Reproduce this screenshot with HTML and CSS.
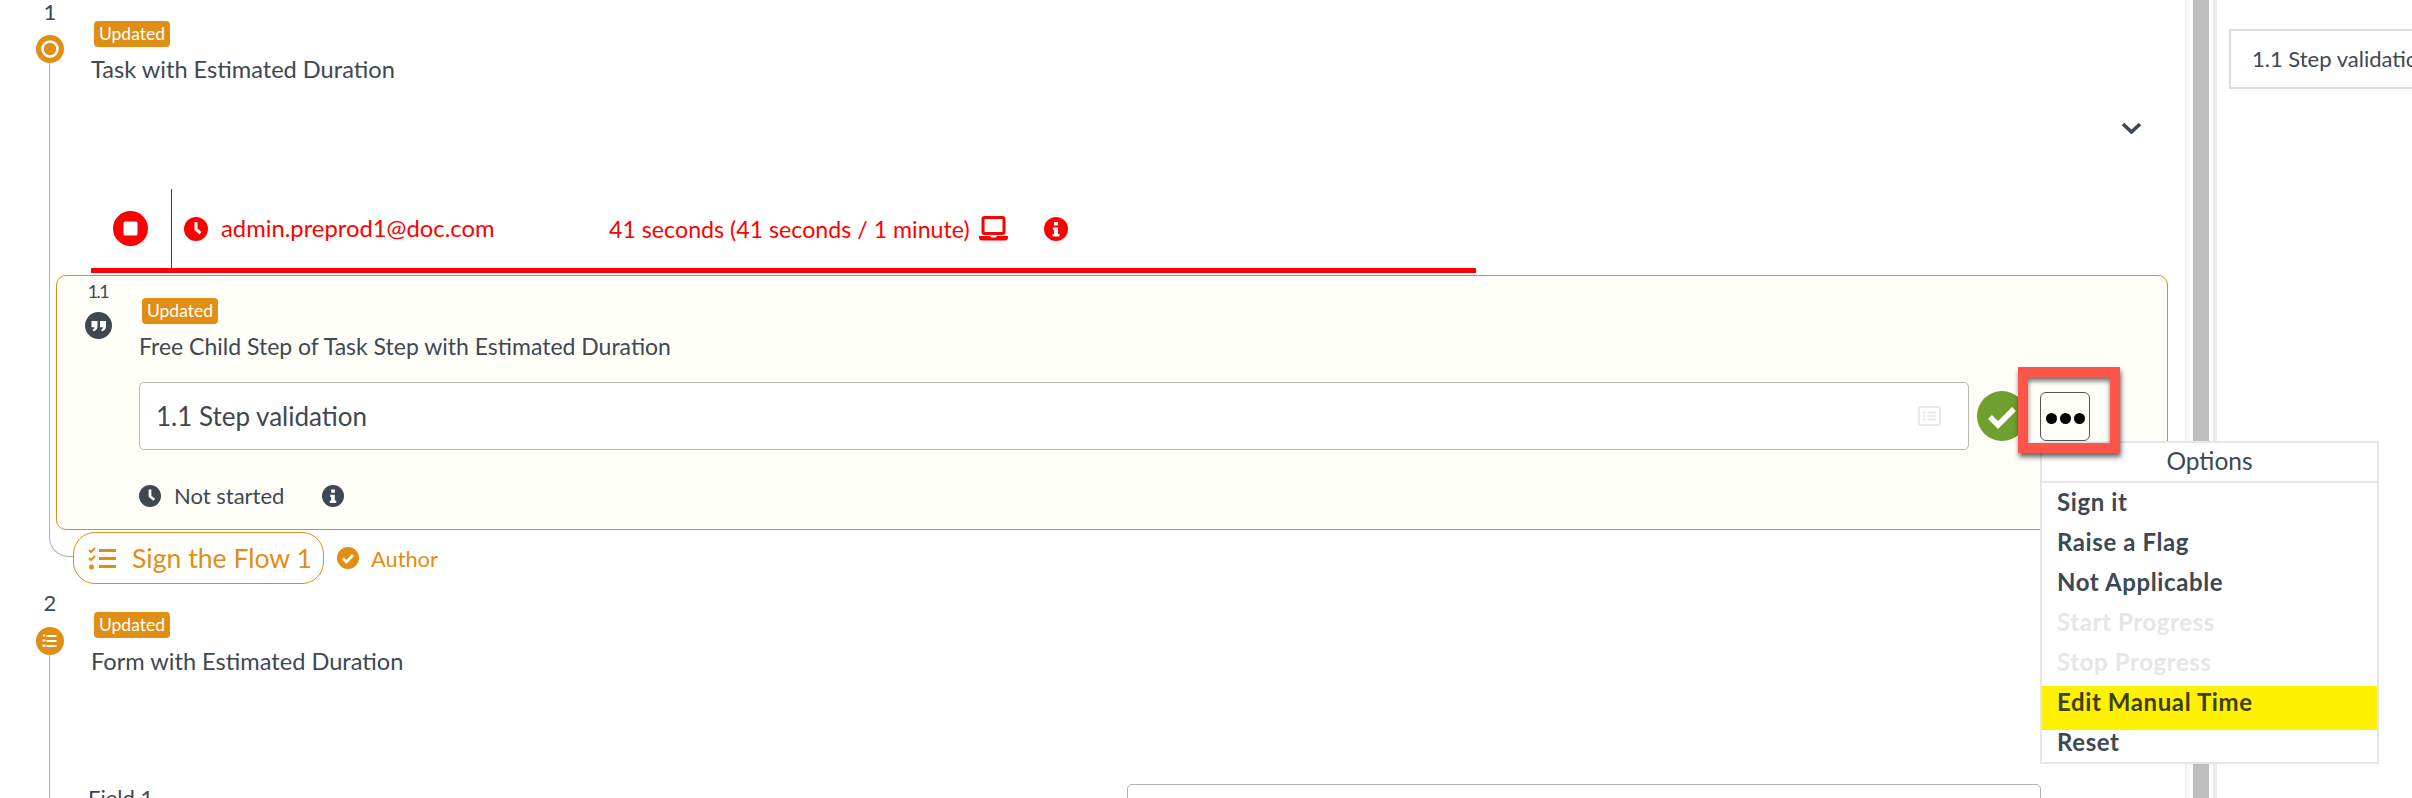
FILE: index.html

```html
<!DOCTYPE html>
<html lang="en">
<head>
  <meta charset="UTF-8">
  <title>Task with Estimated Duration</title>
  <link rel="stylesheet" href="styles.css">
</head>
<body>

<div class="main">

  <!-- step 1 -->
  <div class="step">
    <div class="rail">
      <div class="rail-num">1</div>
      <svg class="rail-icon" viewBox="0 0 28 28"><circle cx="14" cy="14" r="14" fill="#e08e14"/><circle cx="14" cy="14" r="7.5" fill="none" stroke="#fff" stroke-width="2.6"/></svg>
      <div class="rail-line"></div>
      <div class="rail-curve"></div>
    </div>
    <div class="step-body">
      <span class="badge">Updated</span>
      <div class="step-title">Task with Estimated Duration</div>
      <div class="chevron-row">
        <svg width="21" height="12" viewBox="0 0 21 12"><path d="M2 2l8.500 8 8.500-8" fill="none" stroke="#3e4852" stroke-width="3.600"/></svg>
      </div>

      <div class="timer">
        <svg class="timer-stop" viewBox="0 0 35 35"><circle cx="17.500" cy="17.500" r="17.500" fill="#f00"/><rect x="10.500" y="10.500" width="14" height="14" rx="1.500" fill="#fff"/></svg>
        <div class="timer-sep"></div>
        <svg class="timer-clock" viewBox="0 0 24 24"><circle cx="12" cy="12" r="12" fill="#f00"/><path d="M10.500 5h3v6.600l4 3.400-2 2.200-5-4.300z" fill="#fff"/></svg>
        <span class="timer-user">admin.preprod1@doc.com</span>
        <span class="timer-time">41 seconds (41 seconds / 1 minute)</span>
        <svg class="timer-laptop" width="29" height="25" viewBox="0 0 29 25"><rect x="4" y="1.500" width="21" height="16" rx="1.500" fill="none" stroke="#f00" stroke-width="3"/><path d="M0 20h11l1 1.500h5l1-1.500h11v1.500a3 3 0 0 1-3 3h-23a3 3 0 0 1-3-3z" fill="#f00"/></svg>
        <svg class="timer-info" width="24" height="24" viewBox="0 0 24 24"><circle cx="12" cy="12" r="12" fill="#f00"/><path d="M10 5h4v3.500h-4zM9 10.500h5v6.500h1.500v2.500h-7v-2.500h1.500v-4h-1z" fill="#fff"/></svg>
      </div>

      <div class="card">
        <div class="card-rail">
          <div class="card-num">1.1</div>
          <svg width="27" height="27" viewBox="0 0 27 27"><circle cx="13.500" cy="13.500" r="13.500" fill="#3e4852"/><path d="M6.500 9h6v5.500c0 2.800-1.800 4.300-4.200 4.800l-.6-1.800c1.100-.3 1.800-1 1.900-2.200h-3.100zM15 9h6v5.500c0 2.800-1.800 4.300-4.200 4.800l-.6-1.800c1.100-.3 1.800-1 1.900-2.200h-3.100z" fill="#fff"/></svg>
        </div>
        <div class="card-body">
          <span class="badge">Updated</span>
          <div class="card-title">Free Child Step of Task Step with Estimated Duration</div>
          <div class="field-row">
            <div class="field">
              <span>1.1 Step validation</span>
              <svg width="23" height="20" viewBox="0 0 23 20"><rect x="1" y="1" width="21" height="18" rx="2" fill="none" stroke="#e8e8e8" stroke-width="2"/><path d="M5 5.500h2.500v2h-2.500zM9.500 5.500h8.500v2h-8.500zM5 9h2.500v2h-2.500zM9.500 9h8.500v2h-8.500zM5 12.500h2.500v2h-2.500zM9.500 12.500h8.500v2h-8.500z" fill="#e8e8e8"/></svg>
            </div>
            <svg class="done" width="50" height="50" viewBox="0 0 50 50"><circle cx="25" cy="25" r="25" fill="#6f9f2f"/><path d="M13 26l8 8 16-16" fill="none" stroke="#fff" stroke-width="5.500"/></svg>
            <div class="opt-wrap">
              <div class="opt-btn"><i></i><i></i><i></i></div>
              <div class="callout"></div>
              <div class="menu">
                <div class="menu-head">Options</div>
                <div class="menu-item">Sign it</div>
                <div class="menu-item">Raise a Flag</div>
                <div class="menu-item">Not Applicable</div>
                <div class="menu-item off">Start Progress</div>
                <div class="menu-item off">Stop Progress</div>
                <div class="menu-item mark">Edit Manual Time</div>
                <div class="menu-item">Reset</div>
              </div>
            </div>
          </div>
          <div class="status">
            <svg width="22" height="22" viewBox="0 0 24 24"><circle cx="12" cy="12" r="12" fill="#3e4852"/><path d="M10.500 5h3v6.600l4 3.400-2 2.200-5-4.300z" fill="#fff"/></svg>
            <span class="status-text">Not started</span>
            <svg width="22" height="22" viewBox="0 0 24 24"><circle cx="12" cy="12" r="12" fill="#3e4852"/><path d="M10 5h4v3.500h-4zM9 10.500h5v6.500h1.500v2.500h-7v-2.500h1.500v-4h-1z" fill="#fff"/></svg>
          </div>
        </div>
      </div>

      <div class="sign-row">
        <div class="pill">
          <svg width="28" height="23" viewBox="0 0 28 23"><path d="M1 3l2 2 4-4M1 11l2 2 4-4" fill="none" stroke="#e08e14" stroke-width="2"/><circle cx="3.500" cy="20" r="2.500" fill="#e08e14"/><path d="M11 2h17v3h-17zM11 10h17v3h-17zM11 18h17v3h-17z" fill="#e08e14"/></svg>
          <span>Sign the Flow 1</span>
        </div>
        <svg width="22" height="22" viewBox="0 0 22 22"><circle cx="11" cy="11" r="11" fill="#e08e14"/><path d="M6 11.500l3.500 3.500 6.500-7" fill="none" stroke="#fff" stroke-width="2.800"/></svg>
        <span class="sign-role">Author</span>
      </div>
    </div>
  </div>

  <!-- step 2 -->
  <div class="step step-two">
    <div class="rail">
      <div class="rail-num">2</div>
      <svg class="rail-icon" viewBox="0 0 28 28"><circle cx="14" cy="14" r="14" fill="#e08e14"/><path d="M10.500 8h10v2h-10zM10.500 13h10v2h-10zM10.500 18h10v2h-10zM7 7.500h2v2h-2zM6.500 12.500h3v2h-3zM6.500 17.500h3v2.500h-3z" fill="#fff"/></svg>
      <div class="rail-line"></div>
    </div>
    <div class="step-body">
      <span class="badge">Updated</span>
      <div class="step-title">Form with Estimated Duration</div>
      <div class="form-row">
        <span class="form-label">Field 1</span>
        <div class="form-input"></div>
      </div>
    </div>
  </div>

</div>

<div class="divider"><div class="divider-bar"></div></div>

<div class="side">
  <div class="side-box">1.1 Step validation</div>
</div>

</body>
</html>
```

FILE: styles.css

```css
html, body {
  margin: 0;
  height: 798px;
  overflow: hidden;
}
body {
  display: flex;
  background-color: #fff;
  color: #3e4852;
  font-family: 'Lato', sans-serif;
}
.main {
  width: 2185px;
  flex: none;
}
.step {
  display: grid;
  grid-template-columns: 91px 1fr;
}
.step-two {
  margin-top: 7px;
  height: 300px;
}
.step-two .rail-icon {
  margin-top: 12px;
}
.step-two .step-title {
  margin-top: 9px;
}

/* timeline column */
.rail {
  display: flex;
  flex-direction: column;
  align-items: flex-start;
}
.rail-num {
  width: 100px;
  height: 24px;
  line-height: 24px;
  text-align: center;
  font-size: 22px;
}
.rail-icon {
  width: 28px;
  height: 28px;
  margin: 10.500px 0 0 36px;
  flex: none;
}
.rail-line {
  flex: 1;
  width: 1px;
  margin-left: 49px;
  background-color: #b3b3b3;
}
.rail-curve {
  width: 24px;
  height: 20px;
  margin: 0 0 27px 49px;
  box-sizing: border-box;
  border-left: 1px solid #b3b3b3;
  border-bottom: 1px solid #b3b3b3;
  border-bottom-left-radius: 20px;
}

.badge {
  display: block;
  width: 76px;
  height: 26px;
  margin: 21px 0 0 3px;
  line-height: 25px;
  text-align: center;
  font-size: 17.500px;
  color: #fff;
  background-color: #e08e14;
  border-radius: 4px;
}
.step-title {
  margin-top: 8px;
  height: 28px;
  line-height: 28px;
  font-size: 23.600px;
}
.chevron-row {
  display: flex;
  justify-content: flex-end;
  height: 12px;
  margin-top: 39px;
  padding-right: 43px;
}

/* running timer */
.timer {
  display: flex;
  align-items: center;
  width: 1385px;
  height: 79px;
  margin-top: 55px;
  border-bottom: 5px solid #f00;
  color: #f00;
  font-size: 23.200px;
}
.timer-stop {
  width: 35px;
  height: 35px;
  margin-left: 22px;
}
.timer-sep {
  width: 1px;
  height: 79px;
  margin-left: 23px;
  background-color: #d40000;
}
.timer-clock {
  width: 24px;
  height: 24px;
  margin-left: 12px;
}
.timer-user {
  width: 388px;
  margin-left: 13px;
  margin-top: -2px;
  font-size: 23.800px;
}
.timer-time {
  width: 361px;
  white-space: nowrap;
}
.timer-laptop {
  margin-left: 9px;
}
.timer-info {
  margin-left: 36px;
}

/* child step card */
.card {
  display: flex;
  box-sizing: border-box;
  height: 255px;
  margin: 2px 17px 0 -35px;
  border: 1px solid #e08e14;
  border-radius: 10px;
  background-color: #fffef8;
}
.card-rail {
  flex: none;
  width: 82px;
  display: flex;
  flex-direction: column;
  align-items: center;
  padding-top: 5px;
}
.card-num {
  height: 31px;
  line-height: 20px;
  font-size: 18px;
  letter-spacing: -1.500px;
}
.card-body {
  flex: 1;
  padding-right: 77px;
}
.card-body .badge {
  margin-top: 22px;
}
.card-title {
  margin-top: 9px;
  height: 26px;
  line-height: 26px;
  font-size: 23px;
}
.field-row {
  display: flex;
  align-items: center;
  margin-top: 23px;
}
.field {
  flex: 1;
  box-sizing: border-box;
  height: 68px;
  display: flex;
  align-items: center;
  justify-content: space-between;
  padding: 0 27px 0 16px;
  font-size: 26px;
  background-color: #fff;
  border: 1px solid #b9b9b9;
  border-radius: 5px;
}
.done {
  flex: none;
  margin-left: 8px;
}
.opt-wrap {
  position: relative;
  width: 50px;
  height: 49px;
  margin-left: 13px;
  flex: none;
}
.opt-btn {
  box-sizing: border-box;
  width: 50px;
  height: 49px;
  padding-top: 20px;
  display: flex;
  justify-content: center;
  gap: 3px;
  border: 1px solid #555;
  border-radius: 6px;
}
.opt-btn i {
  width: 11px;
  height: 11px;
  border-radius: 50%;
  background-color: #000;
}
.callout {
  position: absolute;
  left: -22px;
  top: -25px;
  width: 102px;
  height: 86px;
  box-sizing: border-box;
  border: 10px solid #fd5549;
  box-shadow: 1px 4px 5px rgba(0, 0, 0, 0.6), inset 0 4px 5px rgba(0, 0, 0, 0.55);
  z-index: 3;
}

/* options menu */
.menu {
  position: absolute;
  left: 0;
  top: 49.500px;
  width: 339px;
  height: 323px;
  box-sizing: border-box;
  background-color: #fff;
  border: 2px solid #e6e6e6;
  z-index: 2;
}
.menu-head {
  height: 38px;
  line-height: 36px;
  text-align: center;
  font-size: 24.500px;
  border-bottom: 2px solid #e6e6e6;
}
.menu-item {
  height: 40px;
  line-height: 37px;
  padding-left: 15px;
  font-size: 24px;
  font-weight: 700;
  letter-spacing: 0.600px;
}
.menu-item.off {
  color: #e6e6e6;
}
.menu-item.mark {
  height: 44px;
  margin: 3px 0 -7px;
  line-height: 31px;
  color: #3d3f10;
  background-color: #fff100;
}

.status {
  display: flex;
  align-items: center;
  margin-top: 32px;
}
.status-text {
  width: 148px;
  margin-left: 13px;
  font-size: 22px;
}

/* signature row under the card */
.sign-row {
  display: flex;
  align-items: center;
  margin: 2px 0 0 -18px;
  height: 52px;
  color: #e08e14;
}
.pill {
  box-sizing: border-box;
  width: 251px;
  height: 52px;
  display: flex;
  align-items: center;
  gap: 16px;
  padding-left: 14px;
  font-size: 26.600px;
  white-space: nowrap;
  border: 1px solid #e08e14;
  border-radius: 22px;
}
.sign-row > svg {
  margin-left: 13px;
}
.sign-role {
  margin-left: 12px;
  font-size: 21.800px;
}

/* form field cut off by the window */
.form-row {
  display: flex;
  margin: 109px 0 0 -3px;
}
.form-label {
  width: 1039px;
  font-size: 22px;
}
.form-input {
  box-sizing: border-box;
  width: 914px;
  height: 60px;
  background-color: #fff;
  border: 1px solid #b3b3b3;
  border-radius: 5px;
}

/* splitter between the panels */
.divider {
  flex: none;
  box-sizing: border-box;
  width: 32px;
  padding: 0 4px 0 6px;
  background-color: #fbfbfb;
  border-left: 2px solid #efefef;
  border-right: 4px solid #ebebeb;
}
.divider-bar {
  width: 16px;
  height: 100%;
  background-color: #bfbfbf;
}
.side {
  flex: none;
  width: 195px;
  padding: 29px 0 0 12px;
  overflow: hidden;
}
.side-box {
  box-sizing: border-box;
  width: 400px;
  height: 60px;
  line-height: 55px;
  padding-left: 21px;
  font-size: 22px;
  border: 2px solid #ddd;
}
```
